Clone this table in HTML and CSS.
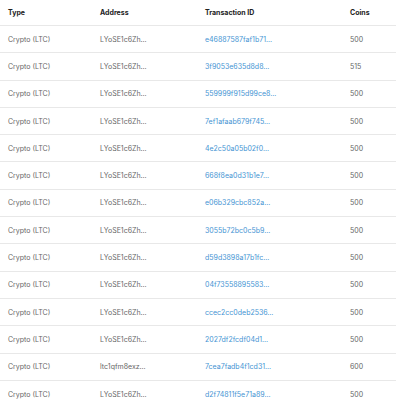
FILE: index.html
```html
<!DOCTYPE html>
<html>
<head>
<meta charset="utf-8">
<link rel="stylesheet" href="styles.css">
</head>
<body>
<div class="table">
  <div class="row head">
    <div class="c1">Type</div><div class="c2">Address</div><div class="c3">Transaction ID</div><div class="c4">Coins</div>
  </div>
  <div class="row"><div class="c1">Crypto (LTC)</div><div class="c2">LYoSE1c6Zh…</div><div class="c3 tx">e46887587faf1b71…</div><div class="c4">500</div></div>
  <div class="row"><div class="c1">Crypto (LTC)</div><div class="c2">LYoSE1c6Zh…</div><div class="c3 tx">3f9053e635d8d8…</div><div class="c4">515</div></div>
  <div class="row"><div class="c1">Crypto (LTC)</div><div class="c2">LYoSE1c6Zh…</div><div class="c3 tx">559999f915d99ce8…</div><div class="c4">500</div></div>
  <div class="row"><div class="c1">Crypto (LTC)</div><div class="c2">LYoSE1c6Zh…</div><div class="c3 tx">7ef1afaab679f745…</div><div class="c4">500</div></div>
  <div class="row"><div class="c1">Crypto (LTC)</div><div class="c2">LYoSE1c6Zh…</div><div class="c3 tx">4e2c50a05b02f0…</div><div class="c4">500</div></div>
  <div class="row"><div class="c1">Crypto (LTC)</div><div class="c2">LYoSE1c6Zh…</div><div class="c3 tx">668f8ea0d31b1e7…</div><div class="c4">500</div></div>
  <div class="row"><div class="c1">Crypto (LTC)</div><div class="c2">LYoSE1c6Zh…</div><div class="c3 tx">e06b329cbc852a…</div><div class="c4">500</div></div>
  <div class="row"><div class="c1">Crypto (LTC)</div><div class="c2">LYoSE1c6Zh…</div><div class="c3 tx">3055b72bc0c5b9…</div><div class="c4">500</div></div>
  <div class="row"><div class="c1">Crypto (LTC)</div><div class="c2">LYoSE1c6Zh…</div><div class="c3 tx">d59d3898a17b1fc…</div><div class="c4">500</div></div>
  <div class="row"><div class="c1">Crypto (LTC)</div><div class="c2">LYoSE1c6Zh…</div><div class="c3 tx">04f73558895583…</div><div class="c4">500</div></div>
  <div class="row"><div class="c1">Crypto (LTC)</div><div class="c2">LYoSE1c6Zh…</div><div class="c3 tx">ccec2cc0deb2536…</div><div class="c4">500</div></div>
  <div class="row"><div class="c1">Crypto (LTC)</div><div class="c2">LYoSE1c6Zh…</div><div class="c3 tx">2027df2fcdf04d1…</div><div class="c4">500</div></div>
  <div class="row"><div class="c1">Crypto (LTC)</div><div class="c2">ltc1qfm8exz…</div><div class="c3 tx">7cea7fadb4f1cd31…</div><div class="c4">600</div></div>
  <div class="row"><div class="c1">Crypto (LTC)</div><div class="c2">LYoSE1c6Zh…</div><div class="c3 tx">d2f74811f5e71a89…</div><div class="c4">500</div></div>
</div>
</body>
</html>
```
FILE: styles.css
```css
html, body {
  margin: 0;
  padding: 0;
  background: #fff;
  overflow: hidden;
}
body {
  font-family: Inter, "Noto Sans", sans-serif;
  font-size: 7px;
  color: #666;
}
.table {
  display: flex;
  flex-direction: column;
}
.row {
  display: grid;
  grid-template-columns: 92px 105px 145px 1fr;
  padding-left: 8px;
  height: 27.3px;
  flex: none;
  align-items: center;
  border-bottom: 1px solid #e8e8e8;
  box-sizing: border-box;
  white-space: nowrap;
}
.row.head {
  height: 26px;
  color: #222;
  font-weight: 700;
}
.tx {
  color: #4594d3;
}
```
